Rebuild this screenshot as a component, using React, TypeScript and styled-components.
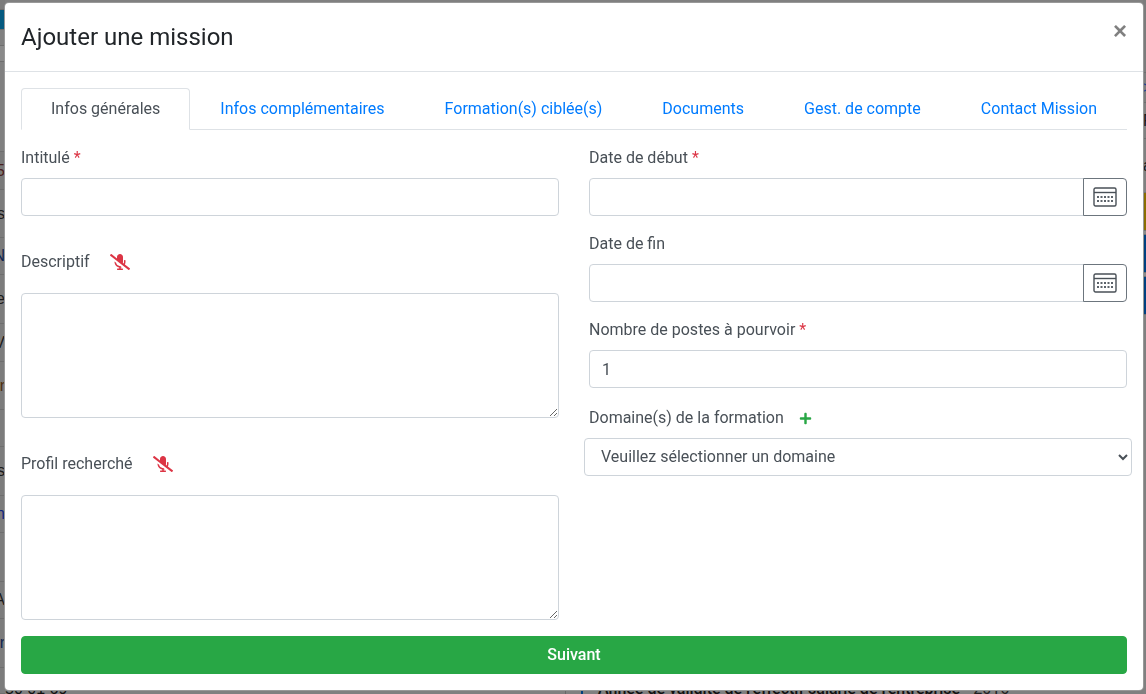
import { createGlobalStyle } from "styled-components";
import styled from "styled-components";
import { FaMicrophoneSlash, FaPlus } from "react-icons/fa";

const GlobalStyle = createGlobalStyle`
  html, body {
    margin: 0;
    height: 100%;
    overflow: hidden;
    background: #808080;
  }
  * {
    box-sizing: border-box;
  }
`;

const leftRows = [
  { h: 10, bg: "#7c7c7c", text: "" },
  { h: 20, bg: "#055a80", text: "" },
  { h: 16, bg: "#808080", text: "" },
  { h: 16, bg: "#8a8a8a", text: "" },
  { h: 90, bg: "#808080", text: "" },
  { h: 38, bg: "#7a7a7a", text: "5", color: "#4a2020" },
  { h: 48, bg: "#7c7c7c", text: "s" },
  { h: 37, bg: "#7c7c7c", text: "N", color: "#0f2550" },
  { h: 49, bg: "#7c7c7c", text: "e" },
  { h: 38, bg: "#7c7c7c", text: "V" },
  { h: 48, bg: "#7c7c7c", text: "r", color: "#50300f" },
  { h: 37, bg: "#7c7c7c", text: "" },
  { h: 49, bg: "#7c7c7c", text: "s" },
  { h: 37, bg: "#7c7c7c", text: "n", color: "#0f2580" },
  { h: 49, bg: "#7c7c7c", text: "" },
  { h: 37, bg: "#7c7c7c", text: "A" },
  { h: 49, bg: "#7c7c7c", text: "r", color: "#0f2550" },
  { h: 26, bg: "#7c7c7c", text: "" },
];

const rightRows = [
  { h: 73, bg: "#7c7c7c", text: "" },
  { h: 30, bg: "#7c7c7c", text: ">", color: "#1f3f90" },
  { h: 36, bg: "#808080", text: "F" },
  { h: 54, bg: "#808080", text: "a" },
  { h: 38, bg: "#8a6d00", text: "" },
  { h: 4, bg: "#8a8a8a", text: "" },
  { h: 38, bg: "#004080", text: "" },
  { h: 4, bg: "#8a8a8a", text: "" },
  { h: 38, bg: "#004080", text: "" },
];

const CalendarIcon = () => (
  <svg width="24" height="20" viewBox="0 0 24 20" fill="none">
    <rect x="1" y="1" width="22" height="18" rx="1.5" stroke="#495057" strokeWidth="1.4" />
    <path d="M1 5.5H23" stroke="#495057" strokeWidth="1.4" />
    {[5, 8.5, 12, 15.5, 19].map((x) =>
      [10, 14].map((y) => (
        <rect key={`${x}-${y}`} x={x - 1} y={y - 1} width="2" height="2" fill="#5c636a" />
      ))
    )}
  </svg>
);

const App = () => {
  return (
    <>
      <GlobalStyle />
      <PageBehind>
        <Strip $width={5}>
          {leftRows.map((row, i) => (
            <StripRow key={i} $height={row.h} $bg={row.bg} $color={row.color} $justify="flex-end">
              {row.text}
            </StripRow>
          ))}
        </Strip>
        <Middle>
          <TopSliver />
          <BottomText>
            <BottomLeft>50 01 69</BottomLeft>
            <BottomRule />
            <BottomTitle>Année de validité de l'effectif salarié de l'entreprise</BottomTitle>
            <BottomYear>2016</BottomYear>
          </BottomText>
        </Middle>
        <Strip $width={3}>
          {rightRows.map((row, i) => (
            <StripRow key={i} $height={row.h} $bg={row.bg} $color={row.color} $justify="flex-start">
              {row.text}
            </StripRow>
          ))}
        </Strip>
      </PageBehind>

      <Modal>
        <Header>
          <Title>Ajouter une mission</Title>
          <Close type="button">×</Close>
        </Header>
        <Body>
          <Tabs>
            <Tab $active>Infos générales</Tab>
            <Tab>Infos complémentaires</Tab>
            <Tab>Formation(s) ciblée(s)</Tab>
            <Tab>Documents</Tab>
            <Tab>Gest. de compte</Tab>
            <Tab>Contact Mission</Tab>
          </Tabs>
          <FormGrid>
            <Column>
              <Group>
                <Label>
                  Intitulé <Star>*</Star>
                </Label>
                <Input type="text" />
              </Group>
              <Group>
                <IconLabel>
                  Descriptif
                  <MicButton>
                    <FaMicrophoneSlash size={20} />
                  </MicButton>
                </IconLabel>
                <TextArea />
              </Group>
              <Group>
                <IconLabel>
                  Profil recherché
                  <MicButton>
                    <FaMicrophoneSlash size={20} />
                  </MicButton>
                </IconLabel>
                <TextArea />
              </Group>
            </Column>
            <Column>
              <Group>
                <Label>
                  Date de début <Star>*</Star>
                </Label>
                <InputRow>
                  <DateInput type="text" />
                  <CalendarButton type="button">
                    <CalendarIcon />
                  </CalendarButton>
                </InputRow>
              </Group>
              <Group>
                <Label>Date de fin</Label>
                <InputRow>
                  <DateInput type="text" />
                  <CalendarButton type="button">
                    <CalendarIcon />
                  </CalendarButton>
                </InputRow>
              </Group>
              <Group>
                <Label>
                  Nombre de postes à pourvoir <Star>*</Star>
                </Label>
                <Input type="text" defaultValue="1" />
              </Group>
              <Group>
                <PlusLabel>
                  Domaine(s) de la formation
                  <PlusIcon>
                    <FaPlus size={13} />
                  </PlusIcon>
                </PlusLabel>
                <Select defaultValue="">
                  <option value="">Veuillez sélectionner un domaine</option>
                </Select>
              </Group>
            </Column>
          </FormGrid>
          <SubmitButton type="button">Suivant</SubmitButton>
        </Body>
      </Modal>
    </>
  );
};

export default App;

const PageBehind = styled.div`
  height: 694px;
  display: flex;
  overflow: hidden;
  background: #808080;
  font-family: "Liberation Sans", Arial, sans-serif;
  color: #111;
`;

const Strip = styled.div<{ $width: number }>`
  width: ${(p) => p.$width}px;
  flex: none;
  display: flex;
  flex-direction: column;
  overflow: hidden;
`;

const StripRow = styled.div<{ $height: number; $bg: string; $color?: string; $justify: string }>`
  width: 100%;
  height: ${(p) => p.$height}px;
  flex: none;
  display: flex;
  align-items: center;
  justify-content: ${(p) => p.$justify};
  background: ${(p) => p.$bg};
  border-bottom: 1px solid #6e6e6e;
  color: ${(p) => p.$color || "#1a1a1a"};
  font-size: 16px;
  white-space: nowrap;
`;

const Middle = styled.div`
  flex: 1;
  display: flex;
  flex-direction: column;
`;

const TopSliver = styled.div`
  width: 35px;
  height: 3px;
  background: #3d7f9a;
`;

const BottomText = styled.div`
  display: flex;
  align-items: flex-start;
  margin-top: 679px;
  font-size: 16px;
  line-height: 20px;
  white-space: nowrap;
`;

const BottomLeft = styled.span`
  width: 560px;
`;

const BottomRule = styled.span`
  width: 33px;
  height: 20px;
  border-left: 1px solid #666;
  position: relative;

  &::after {
    content: "";
    position: absolute;
    left: 15px;
    top: 0;
    width: 2px;
    height: 20px;
    background: #004080;
  }
`;

const BottomTitle = styled.span`
  font-family: Roboto, "Liberation Sans", sans-serif;
  font-weight: 500;
  color: #111;
`;

const BottomYear = styled.span`
  margin-left: 13px;
  font-family: Roboto, "Liberation Sans", sans-serif;
  color: #222;
`;

const Modal = styled.div`
  position: fixed;
  top: 2px;
  left: 4px;
  width: 1140px;
  height: 689px;
  background: #fff;
  border: 1px solid rgba(0, 0, 0, 0.4);
  border-radius: 5px;
  font-family: Roboto, "Liberation Sans", Arial, sans-serif;
  font-size: 16px;
  line-height: 24px;
  color: #495057;
`;

const Header = styled.div`
  display: flex;
  align-items: flex-start;
  justify-content: space-between;
  padding: 16px;
  border-bottom: 1px solid #dee2e6;
`;

const Title = styled.h4`
  margin: 0;
  font-size: 24px;
  line-height: 36px;
  font-weight: 400;
  color: #212529;
`;

const Close = styled.button`
  border: 0;
  background: none;
  padding: 0;
  margin: -3px 0 0 0;
  width: 14px;
  height: 30px;
  font-family: Arial, "Liberation Sans", sans-serif;
  font-size: 24px;
  line-height: 30px;
  font-weight: 700;
  color: #808080;
`;

const Body = styled.div`
  padding: 16px;
`;

const Tabs = styled.div`
  display: flex;
  border-bottom: 1px solid #dee2e6;
  height: 42px;
  margin-bottom: 16px;
`;

const Tab = styled.div<{ $active?: boolean }>`
  height: 42px;
  padding: 8px 29px;
  border: 1px solid ${(p) => (p.$active ? "#dee2e6" : "transparent")};
  border-bottom-color: ${(p) => (p.$active ? "#fff" : "transparent")};
  border-radius: 4px 4px 0 0;
  background: ${(p) => (p.$active ? "#fff" : "transparent")};
  color: ${(p) => (p.$active ? "#495057" : "#007bff")};
  white-space: nowrap;
  flex: ${(p) => (p.$active ? "none" : "1 0 auto")};
  text-align: center;
`;

const FormGrid = styled.div`
  display: grid;
  grid-template-columns: 538px 538px;
  column-gap: 30px;
  height: 474px;
  margin-bottom: 16px;
`;

const Column = styled.div`
  display: flex;
  flex-direction: column;
  gap: 16px;
`;

const Group = styled.div`
  display: flex;
  flex-direction: column;
`;

const Label = styled.label`
  display: block;
  margin-bottom: 8px;
`;

const IconLabel = styled.label`
  display: flex;
  align-items: center;
  height: 38px;
  margin: 11px 0 12px;
`;

const PlusLabel = styled.label`
  display: flex;
  align-items: center;
  height: 26px;
  margin-bottom: 8px;
  padding-top: 2px;
`;

const MicButton = styled.span`
  display: inline-flex;
  margin-left: 20px;
  color: #dc3545;
`;

const PlusIcon = styled.span`
  display: inline-flex;
  margin-left: 15px;
  color: #28a745;
`;

const Star = styled.span`
  color: #dc3545;
`;

const Input = styled.input`
  width: 100%;
  height: 38px;
  padding: 6px 12px;
  border: 1px solid #ced4da;
  border-radius: 4px;
  font: inherit;
  color: #495057;
  background: #fff;
  outline: none;
`;

const InputRow = styled.div`
  display: flex;
`;

const DateInput = styled(Input)`
  flex: 1;
  min-width: 0;
  border-radius: 4px 0 0 4px;
`;

const CalendarButton = styled.button`
  width: 44px;
  height: 38px;
  margin-left: -1px;
  padding: 0;
  display: flex;
  align-items: center;
  justify-content: center;
  background: #fff;
  border: 1px solid #6c757d;
  border-radius: 0 4px 4px 0;
`;

const TextArea = styled.textarea`
  display: block;
  width: 100%;
  height: 125px;
  padding: 6px 12px;
  border: 1px solid #ced4da;
  border-radius: 4px;
  font: inherit;
  background: #fff;
  outline: none;
`;

const Select = styled.select`
  height: 38px;
  margin: 0 -5px;
  padding: 5px 8px 7px 12px;
  border: 1px solid #ced4da;
  border-radius: 4px;
  font: inherit;
  color: #495057;
  background: #fff;
  outline: none;
`;

const SubmitButton = styled.button`
  display: block;
  width: 100%;
  height: 38px;
  border: 1px solid #28a745;
  border-radius: 4px;
  background: #28a745;
  color: #fff;
  font: inherit;
  font-weight: 500;
`;
